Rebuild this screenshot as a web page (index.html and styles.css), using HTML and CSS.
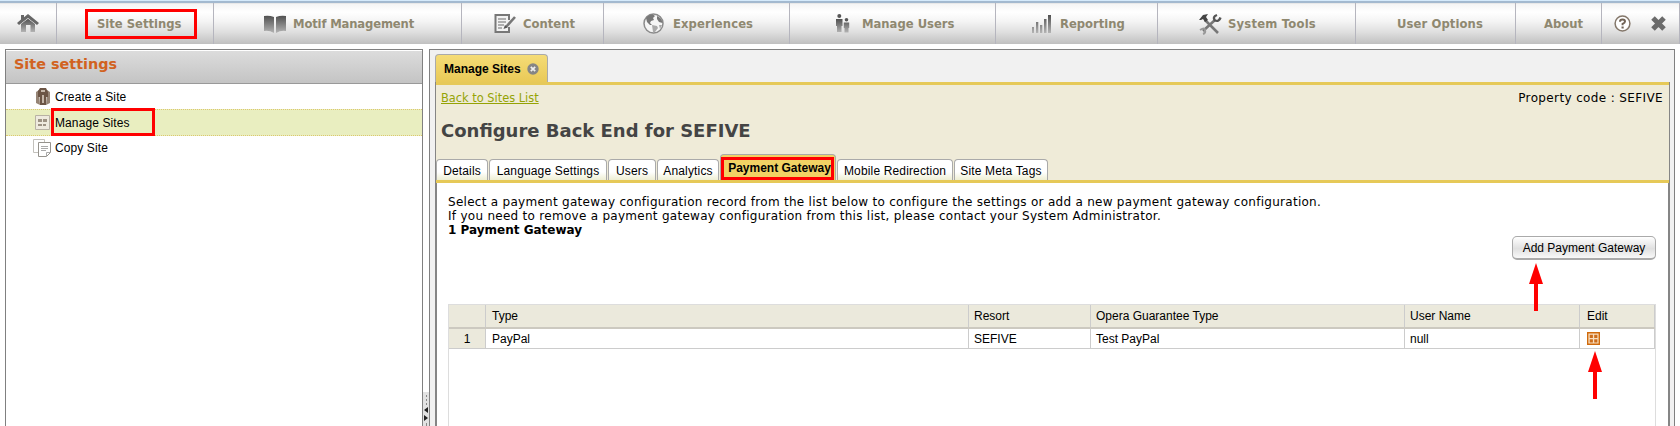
FILE: index.html
```html
<!DOCTYPE html>
<html lang="en">
<head>
<meta charset="utf-8">
<title>Site settings</title>
<link rel="stylesheet" href="styles.css">
</head>
<body>
<nav class="nav">
  <a class="nav-home"><svg class="i-home" width="22" height="20" viewBox="0 0 22 20"><defs><linearGradient id="g" x1="0" y1="0" x2="0" y2="1"><stop offset="0" stop-color="#505050"/><stop offset="1" stop-color="#b4b4b4"/></linearGradient></defs><path fill="url(#g)" d="M4 10 L11 4.7 L18 10 V18 H13.5 V11 H9 V18 H4Z"/><path fill="#666" d="M11 0 L22 9 L20 11 L11 4 L2 11 L0 9 L4 5.5 V1 H7 V3.2Z"/></svg></a>
  <a class="nav-site"><span class="mark-nav">Site Settings</span></a>
  <a class="nav-motif"><svg width="22" height="18" viewBox="0 0 22 18"><path fill="url(#g)" d="M0 1 Q5 0 10 2 V18 Q5 15 0 16Z M12 2 Q17 0 22 1 V16 Q17 15 12 18Z"/></svg><span>Motif Management</span></a>
  <a class="nav-content"><svg width="22" height="21" viewBox="0 0 22 21"><path fill="#f2f2f2" stroke="#777" stroke-width="2" d="M15 7 V2 H1.5 V19 H15 V14"/><path stroke="#999" stroke-width="1.5" d="M4 6H12M4 9H12M4 12H10M4 15H8"/><path stroke="#777" stroke-width="2.6" d="M21 4 L12 14"/><path fill="#555" d="M11 12 L13.5 14.5 L9.5 16Z"/></svg><span>Content</span></a>
  <a class="nav-exp"><svg width="21" height="21" viewBox="0 0 21 21"><circle cx="10.5" cy="10.5" r="9.5" fill="#f6f6f6" stroke="#8b8b8b" stroke-width="1.5"/><path fill="#777" d="M3 5 Q6 1 10 1.5 L12 3 L10 5 L11 7 L8 8 L7 10 L9 12 L7 12 L4 9Z M14 3 Q19 5 19.5 10 L16 9 L14 6Z"/><path fill="#aaa" d="M9 12 L14 13 L15 15 L12 19 L10 19Z M16 12 L19 12 L17 16Z"/></svg><span>Experiences</span></a>
  <a class="nav-users"><svg width="14" height="19" viewBox="0 0 14 19"><circle cx="3.3" cy="2" r="2" fill="#555"/><circle cx="10.5" cy="5.7" r="1.8" fill="#555"/><path fill="url(#g)" d="M0 5H6.5V12H5.5V18H1V12H0Z M7.8 8.5H13.2V14H12.5V18.5H8.5V14H7.8Z"/></svg><span>Manage Users</span></a>
  <a class="nav-rep"><svg width="20" height="20" viewBox="0 0 20 20"><path fill="url(#g)" d="M0 13h2v6H0z M4 8h2.3v11H4z M8 11h2.3v8H8z M12 5h2.5v14H12z M16 1h3v18h-3z"/></svg><span>Reporting</span></a>
  <a class="nav-tools"><svg width="24" height="22" viewBox="0 0 24 22"><path fill="none" stroke="#777" stroke-width="2.6" d="M7 7 L20 20 M17 7 L5 18"/><path fill="#444" d="M1 7 L5 2 L10 1 L8 4 L10 7 L7 9 L5 6 L3 7Z"/><path fill="none" stroke="#555" stroke-width="2.4" d="M19 2 Q14 4 17 7.5 Q21 9 22.5 4.5"/><path fill="none" stroke="#999" stroke-width="2" d="M2 17 Q7 14 7 17 Q8 20 5 21"/></svg><span>System Tools</span></a>
  <a class="nav-opt"><span>User Options</span></a>
  <a class="nav-about"><span>About</span></a>
  <a class="nav-end"><svg width="17" height="17" viewBox="0 0 17 17"><circle cx="8.5" cy="8.5" r="7.4" fill="#fff" stroke="#84776a" stroke-width="1.5"/><path fill="none" stroke="#716356" stroke-width="2" d="M6 6.8 Q6 4.5 8.5 4.5 Q11 4.5 11 6.4 Q11 7.6 8.6 8.8 V10.2"/><path fill="#716356" d="M7.5 11.5h2.2v2H7.5z"/></svg><svg width="15" height="15" viewBox="0 0 15 15"><path stroke="#6b6b6b" stroke-width="5" d="M2 2 L13 13 M13 2 L2 13"/></svg></a>
</nav>
<div class="workspace">
  <aside class="side">
    <h2>Site settings</h2>
    <ul>
      <li><svg width="16" height="19" viewBox="0 0 16 19"><path fill="#968475" d="M1 5 L4 3 L5 18 L1 16Z M12 3 L15 5 V16 L11 18Z"/><path fill="#6c5545" d="M5 1H11L13 5V10H11V18H5V10H3V4Z"/><path fill="#c5b6a8" d="M6 3h4v2H6z M7 8h2v8H7z"/></svg><span>Create a Site</span></li>
      <li class="selected"><svg width="15" height="15" viewBox="0 0 15 15"><path fill="#eeeade" stroke="#b8b2a4" d="M.5.5h14v14H.5z"/><path fill="#9d9384" d="M3 4h4v3H3z M8 4h4v3H8z M3 9h4v2H3z M8 9h3v2H8z"/></svg><span>Manage Sites</span><i class="mark-row"></i></li>
      <li class="copy"><svg width="18" height="18" viewBox="0 0 18 18"><path fill="#fff" stroke="#c3c1bc" d="M.5.5h11v13H.5z"/><path fill="#fff" stroke="#96938d" d="M5.5 3.5h12v10l-4 4h-8z"/><path fill="none" stroke="#aaa" d="M8 7.5h7M8 9.5h7M8 11.5h5M13.5 17.5v-4h4"/></svg><span>Copy Site</span></li>
    </ul>
  </aside>
  <div class="splitter"><svg width="6" height="34" viewBox="0 0 6 34"><path stroke="#888" stroke-dasharray="2 2" d="M3.5 3V14"/><path fill="#222" d="M5 15v6L1 18z M1 23v6l4-3z"/><path stroke="#888" d="M3.5 31v3"/></svg></div>
  <main class="frame">
    <div class="page-tab"><span>Manage Sites</span><svg width="12" height="12" viewBox="0 0 12 12"><circle cx="6" cy="6" r="5.7" fill="#858585"/><path stroke="#eee" stroke-width="1.7" d="M3.8 3.8l4.4 4.4M8.2 3.8L3.8 8.2"/></svg></div>
    <div class="page">
      <header class="page-head">
        <div class="crumb"><a class="back">Back to Sites List</a><span class="prop">Property code : SEFIVE</span></div>
        <h1>Configure Back End for SEFIVE</h1>
        <div class="tabs">
          <a class="t-details"><span>Details</span></a><a class="t-lang"><span>Language Settings</span></a><a class="t-users"><span>Users</span></a><a class="t-ana"><span>Analytics</span></a><a class="t-pay active"><span>Payment Gateway</span><i class="mark-tab"></i></a><a class="t-mob"><span>Mobile Redirection</span></a><a class="t-meta"><span>Site Meta Tags</span></a>
        </div>
      </header>
      <section class="content">
        <p class="intro">Select a payment gateway configuration record from the list below to configure the settings or add a new payment gateway configuration.</p>
        <p class="intro">If you need to remove a payment gateway configuration from this list, please contact your System Administrator.</p>
        <p class="count">1 Payment Gateway</p>
        <div class="actions"><button>Add Payment Gateway</button></div>
        <div class="grid">
          <div class="row head"><div></div><div>Type</div><div>Resort</div><div>Opera Guarantee Type</div><div>User Name</div><div>Edit</div></div>
          <div class="row"><div class="num">1</div><div>PayPal</div><div>SEFIVE</div><div>Test PayPal</div><div>null</div><div><svg width="13" height="13" viewBox="0 0 13 13"><path fill="#f8dfc0" stroke="#d06a0c" stroke-width="1.4" d="M.7.7h11.6v11.6H.7z"/><path fill="#cc6d1c" d="M2.7 2.7h3.2v3.2H2.7z M7.2 2.7h3.2v3.2H7.2z M2.7 7.2h3.2v3.2H2.7z M7.2 7.2h3.2v3.2H7.2z"/></svg></div></div>
        </div>
      </section>
    </div>
  </main>
</div>
<svg class="arrow arrow-add" width="14" height="48" viewBox="0 0 14 48"><path fill="red" d="M7 0L14 21H9V48H5V21H0Z"/></svg>
<svg class="arrow arrow-edit" width="14" height="48" viewBox="0 0 14 48"><path fill="red" d="M7 0L14 21H9V48H5V21H0Z"/></svg>
</body>
</html>
```
FILE: styles.css
```css
* { box-sizing: border-box; }
body { margin: 0; width: 1680px; height: 426px; overflow: hidden; background: #fff; color: #000; font: 12px/16px "Liberation Sans", Arial, sans-serif; position: relative; }
svg { display: block; flex: none; }
span { white-space: nowrap; }
h1, h2, p, ul { margin: 0; padding: 0; }

.nav { display: grid; grid-template-columns: 57px 157px 248px 142px 186px 206px 162px 198px 160px 86px 78px; height: 44px; border-top: 3px solid #a3b9cf; box-shadow: inset 0 1px #e8e8e8; background: linear-gradient(#f3f3f3, #fff 22%, #f4f4f4 45%, #dedede 72%, #c0c0c0); position: relative; }
.nav::before { content: ""; position: absolute; top: -3px; left: 0; right: 0; height: 1px; background: #d5eafb; }
.nav a { display: flex; align-items: center; height: 41px; border-right: 1px solid #b5b5be; color: #8f8870; font: bold 11.6px/16px "DejaVu Sans", sans-serif; }
.nav .nav-home { padding-left: 17px; }
.nav .nav-site { padding-left: 28px; }
.mark-nav { width: 112px; height: 30px; border: 3px solid red; padding: 4px 9px; }
.nav .nav-motif { padding-left: 50px; gap: 7px; letter-spacing: -.15px; }
.nav .nav-content { padding-left: 32px; gap: 7px; }
.nav .nav-exp { padding-left: 39px; gap: 9px; letter-spacing: .1px; }
.nav .nav-users { padding-left: 46px; gap: 12px; }
.nav .nav-rep { padding-left: 36px; gap: 8px; }
.nav .nav-tools { padding-left: 40px; gap: 6px; letter-spacing: .2px; }
.nav .nav-opt { padding-left: 41px; letter-spacing: .1px; }
.nav .nav-about { padding-left: 28px; }
.nav .nav-end { padding-left: 12px; gap: 20px; }

.workspace { display: flex; height: 377px; margin: 5px 5px 0; }
.side { width: 418px; border: solid #808080; border-width: 1px 1px 0; letter-spacing: .1px; }
.side h2 { height: 33px; margin-top: 1px; padding: 3px 8px; border-bottom: 1px solid #999; background: linear-gradient(#dcdcdc, #c4c4c4); color: #d16221; font: bold 14.4px/20px "DejaVu Sans", sans-serif; letter-spacing: 0; }
.side ul { list-style: none; }
.side li { display: flex; align-items: center; gap: 4px; height: 25px; padding-left: 29px; position: relative; }
.side .selected { height: 27px; gap: 5px; border: dotted #dcc96f; border-width: 1px 0; background: #e9eec0; }
.side .copy { padding-left: 27px; height: 23px; }
.mark-row { position: absolute; left: 45px; top: -2px; width: 104px; height: 28px; border: 3px solid red; }
.splitter { width: 6px; padding-top: 343px; }
.splitter svg { background: #e2e2e2; }
.frame { width: 1246px; border: solid #808080; border-width: 1px 1px 0; padding: 4px 4px 0 5px; background: #f1f1f1; }
.page-tab { display: flex; align-items: center; gap: 6px; width: 113px; height: 28px; padding-left: 8px; border: 1px solid #aaa; border-bottom: 0; border-radius: 4px 4px 0 0; background: linear-gradient(#f5dc76, #e9c957); font-weight: bold; }
.page { height: 344px; border: solid #858585; border-width: 0 2px; background: #fff; }
.page-head { height: 101px; margin: 0 -1px; border: solid #e6c958; border-width: 3px 0; background: #efebd8; display: flex; flex-direction: column; }
.crumb { display: flex; justify-content: space-between; padding: 5px 6px 0 5px; font: 12px/17px "DejaVu Sans", sans-serif; }
.back { color: #95a305; text-decoration: underline; font-size: 11.4px; }
.prop { letter-spacing: .37px; }
h1 { color: #444; padding: 12px 0 0 5px; font: bold 18px/24px "DejaVu Sans", sans-serif; white-space: nowrap; }
.tabs { display: flex; align-items: flex-end; gap: 1px; margin-top: auto; letter-spacing: .15px; }
.tabs a { display: flex; justify-content: center; height: 21px; padding-top: 3px; border: solid #aaa; border-width: 1px 1px 0; border-radius: 4px 4px 0 0; background: linear-gradient(#fff 60%, #eeeed2); position: relative; }
.tabs .active { height: 26px; padding: 5px 0 0 3px; background: #f1d264; font-weight: bold; letter-spacing: 0; }
.t-details { width: 52px; }
.t-lang { width: 118px; }
.t-users { width: 48px; }
.t-ana { width: 62px; }
.t-pay { width: 116px; }
.t-mob { width: 116px; }
.t-meta { width: 94px; }
.mark-tab { position: absolute; left: 0; top: 2px; width: 113px; height: 23px; border: 3px solid red; }
.content { padding: 12px 12px 0 11px; font: 12px/14px "DejaVu Sans", sans-serif; }
.content p { white-space: nowrap; height: 14px; }
.intro { letter-spacing: .28px; }
.content .count { font-weight: bold; }
.actions { display: flex; justify-content: flex-end; margin-top: -1px; }
button { width: 144px; height: 24px; padding: 0; border: solid #aaa; border-width: 1px 1px 2px; border-radius: 5px; background: linear-gradient(#fff, #e0e0e0 55%, #f8f8f8); color: #000; font: 12px/16px "Liberation Sans", Arial, sans-serif; }
.grid { height: 123px; margin-top: 44px; border: solid #ddd; border-width: 1px 1px 0; font: 12px/16px "Liberation Sans", Arial, sans-serif; }
.row { display: grid; grid-template-columns: 37px 483px 122px 314px 175px 1fr; height: 20px; border-bottom: 1px solid #ccc; }
.row > div { display: flex; align-items: center; padding-left: 5px; border-right: 1px solid #ccc; }
.row > div:nth-child(2) { padding-left: 6px; }
.row > div:last-child { padding-left: 7px; }
.head { height: 24px; background: #ebe9dc; border-bottom: 2px solid #ccc9c0; }
.row .num { justify-content: center; padding: 0; background: #ebe9dc; }
.arrow { position: absolute; }
.arrow-add { left: 1529px; top: 263px; }
.arrow-edit { left: 1588px; top: 351px; }
```
